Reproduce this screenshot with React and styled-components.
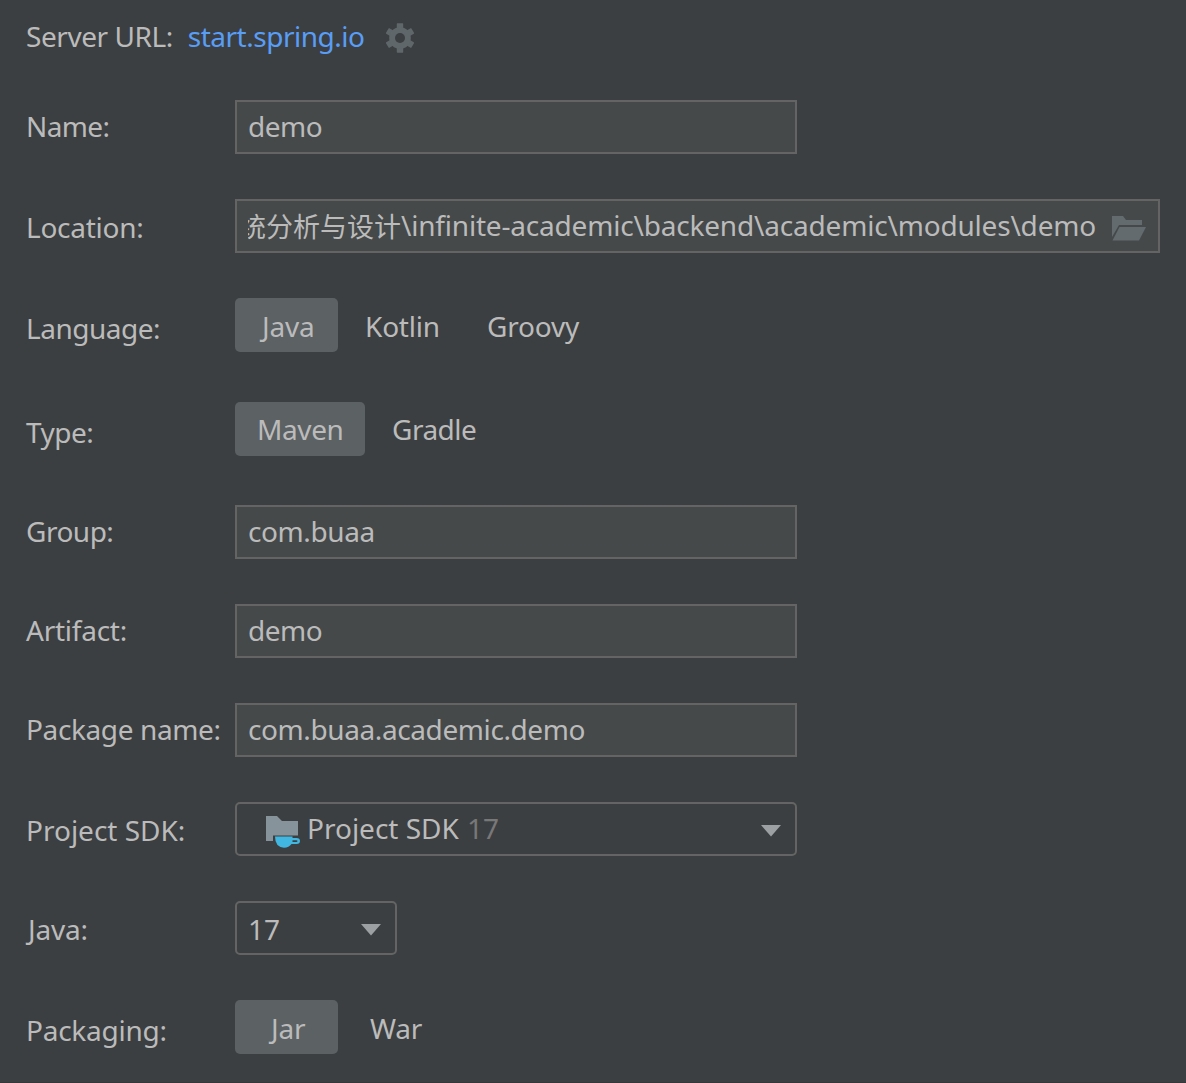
import React from "react";
import styled, { createGlobalStyle } from "styled-components";

const GlobalStyle = createGlobalStyle`
  *, *::before, *::after { box-sizing: border-box; }
  html, body { margin: 0; background: #3c3f41; }
  body {
    color: #bbbbbb;
    font: 400 28px/38px "Noto Sans", "Open Sans", "Noto Sans CJK SC", sans-serif;
  }
`;

const Form = styled.main`
  width: 1186px;
  height: 1083px;
  padding: 17px 26px 0;
  overflow: hidden;
  background: #3c3f41;
  border-bottom: 1px solid #353739;
`;

const Text = styled.span`
  display: block;
  white-space: pre;
  letter-spacing: ${(p) => p.$track || 0}px;
`;

const ServerRow = styled.header`
  display: flex;
  height: 38px;
`;

const Link = styled.a`
  margin-left: 15px;
  color: #589df6;
  letter-spacing: ${(p) => p.$track || 0}px;
`;

const Row = styled.div`
  display: flex;
  height: 54px;
  margin-top: ${(p) => p.$gap || 45}px;
`;

const Label = styled.label`
  flex: 0 0 209px;
  padding: ${(p) => 7 + (p.$drop || 0)}px 0 0 ${(p) => p.$inset || 0}px;
`;

const Field = styled.div`
  display: flex;
  align-items: flex-start;
  width: ${(p) => p.$width || 562}px;
  height: 54px;
  padding: 5px 11px 0;
  border: 2px solid #646464;
  background: #45494a;
`;

const PathClip = styled.div`
  display: flex;
  justify-content: flex-end;
  flex: 0 0 848px;
  overflow: hidden;
`;

const Han = styled.span`
  font-family: "Noto Sans CJK SC", sans-serif;
  font-size: 27px;
  line-height: 1;
  letter-spacing: 0;
  vertical-align: -1px;
`;

const Combo = styled(Field)`
  padding-top: ${(p) => p.$top || 5}px;
  border-radius: 5px;
  background: #3c3f41;
`;

const Muted = styled(Text)`
  margin-left: 8px;
  color: #787878;
`;

const Segment = styled.button`
  display: flex;
  align-items: flex-start;
  width: ${(p) => p.$width}px;
  height: 54px;
  margin: 0;
  padding: ${(p) => p.$top || 9}px 0 0 ${(p) => p.$left}px;
  border: 0;
  border-radius: 5px;
  background: ${(p) => (p.$selected ? "#5c6164" : "transparent")};
  color: inherit;
  font: inherit;
  line-height: 38px;
  text-align: left;
`;

const GearSvg = styled.svg`
  margin: 6px 0 0 21px;
`;

const FolderSvg = styled.svg`
  margin: 9px 0 0 16px;
`;

const SdkSvg = styled.svg`
  margin: 6px 6px 0 18px;
`;

const ArrowSvg = styled.svg`
  margin: ${(p) => p.$top}px 3px 0 auto;
`;

function Gear() {
  return (
    <GearSvg width="28" height="30" viewBox="-14 -15 28 30">
      <g fill="#5f676b">
        {[0, 60, 120].map((a) => (
          <rect key={a} x="-3.2" y="-14.7" width="6.4" height="29.4" rx="0.6" transform={`rotate(${a})`} />
        ))}
      </g>
      <circle r="7.9" fill="none" stroke="#5f676b" strokeWidth="5.8" />
      <circle r="5" fill="#3c3f41" />
    </GearSvg>
  );
}

function OpenFolder() {
  return (
    <FolderSvg width="35" height="26" viewBox="0 0 35 26" fill="#636b6f">
      <path d="M0 1h11l3 4h16v5H7L0 22z" />
      <path d="M7.5 12H34l-7 13.500H0.5z" />
    </FolderSvg>
  );
}

function SdkFolder() {
  return (
    <SdkSvg width="35" height="33" viewBox="0 0 35 33">
      <path d="M0 1h11l5 5h16v14.500H7V26H0z" fill="#87939a" />
      <path
        d="M9 21.500h17.500v1.500h4q3.500 0 3.500 3t-3.500 3h-5q-2.500 3.700-7.500 3.700Q9 32 9 21.500zM26.500 25.200v1.800h4q1 0 1-.9t-1-.9z"
        fill="#40b6e0"
        fillRule="evenodd"
      />
    </SdkSvg>
  );
}

function Arrow({ top }) {
  return (
    <ArrowSvg $top={top} width="20" height="12" viewBox="0 0 20 12">
      <path d="M0 0h20L10 11.500z" fill="#9da0a3" />
    </ArrowSvg>
  );
}

function FormRow({ label, track, drop, gap, inset, children }) {
  return (
    <Row $gap={gap}>
      <Label $drop={drop} $inset={inset}>
        <Text $track={track}>{label}</Text>
      </Label>
      {children}
    </Row>
  );
}

export default function App() {
  return (
    <>
      <GlobalStyle />
      <Form>
        <ServerRow>
          <Text $track={-0.45}>Server URL:</Text>
          <Link $track={-0.48}>start.spring.io</Link>
          <Gear />
        </ServerRow>
        <FormRow label="Name:" track={-0.6} gap={45}>
          <Field><Text $track={-0.45}>demo</Text></Field>
        </FormRow>
        <FormRow label="Location:" track={-0.25} drop={2}>
          <Field $width={925}>
            <PathClip>
              <Text $track={-0.19}><Han>系统分析与设计</Han>\infinite-academic\backend\academic\modules\demo</Text>
            </PathClip>
            <OpenFolder />
          </Field>
        </FormRow>
        <FormRow label="Language:" track={-0.5} drop={4}>
          <Segment $selected $width={103} $left={27}><Text $track={-0.2}>Java</Text></Segment>
          <Segment $width={122} $left={27}><Text $track={-0.2}>Kotlin</Text></Segment>
          <Segment $width={140} $left={27}><Text $track={-0.2}>Groovy</Text></Segment>
        </FormRow>
        <FormRow label="Type:" track={-0.5} drop={4} gap={50}>
          <Segment $selected $width={130} $left={22} $top={8}><Text $track={-0.4}>Maven</Text></Segment>
          <Segment $width={130} $left={27} $top={8}><Text $track={-0.5}>Gradle</Text></Segment>
        </FormRow>
        <FormRow label="Group:" track={-0.5} gap={49}>
          <Field><Text $track={-0.4}>com.buaa</Text></Field>
        </FormRow>
        <FormRow label="Artifact:" track={-0.25}>
          <Field><Text $track={-0.45}>demo</Text></Field>
        </FormRow>
        <FormRow label="Package name:" track={-0.38}>
          <Field><Text $track={-0.4}>com.buaa.academic.demo</Text></Field>
        </FormRow>
        <FormRow label="Project SDK:" track={0} drop={2}>
          <Combo>
            <SdkFolder />
            <Text $track={0}>Project SDK</Text>
            <Muted>17</Muted>
            <Arrow top={16} />
          </Combo>
        </FormRow>
        <FormRow label="Java:" track={-0.2} drop={2} inset={2}>
          <Combo $width={162} $top={7}>
            <Text>17</Text>
            <Arrow top={14} />
          </Combo>
        </FormRow>
        <FormRow label="Packaging:" track={-0.25} drop={4}>
          <Segment $selected $width={103} $left={36}><Text $track={-0.2}>Jar</Text></Segment>
          <Segment $width={110} $left={32}><Text $track={-0.2}>War</Text></Segment>
        </FormRow>
      </Form>
    </>
  );
}
